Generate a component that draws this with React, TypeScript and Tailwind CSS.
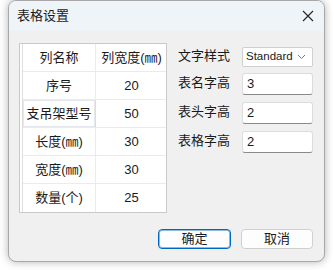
import React from 'react';

const rows = [
  { name: '序号', width: '20' },
  { name: '支吊架型号', width: '50', active: true },
  { name: '长度(㎜)', width: '30' },
  { name: '宽度(㎜)', width: '30' },
  { name: '数量(个)', width: '25' },
];

const fields = [
  { label: '表名字高', value: '3' },
  { label: '表头字高', value: '2' },
  { label: '表格字高', value: '2' },
];

const font = { fontFamily: '"Liberation Sans", "Noto Sans CJK SC", sans-serif' };

const App: React.FC = () => {
  return (
    <div className="w-[333px] h-[270px] bg-white overflow-hidden" style={font}>
      <div className="ml-[8px] w-[317px] h-[262px] flex flex-col rounded-[8px] border border-[#a8a8a8] overflow-hidden shadow-[0_0_8px_rgba(0,0,0,0.3)] bg-[#f0f0f0]">
        {/* title bar */}
        <div className="h-[30px] flex items-center justify-between bg-[#eff4f9] pl-[8px] pr-[9px] text-[13px] text-[#1a1a1a]">
          <span>表格设置</span>
          <svg width="12" height="12" viewBox="0 0 12 12" className="mr-[1px]">
            <path d="M1 1L11 11M11 1L1 11" stroke="#222" strokeWidth="1.1" />
          </svg>
        </div>

        <div className="flex-1 flex flex-col pl-[10px] pr-[10px] pt-[12px]">
          <div className="flex">
            {/* column table */}
            <div className="w-[148px] h-[170px] border border-[#c9c9c9] bg-white pl-[2px]">
              <div className="border-l border-[#dedede] h-full text-[13px] text-[#1a1a1a]">
                <div className="grid grid-cols-[73px_71px] h-[28px] border-b border-[#ebebeb]">
                  <div className="flex items-center justify-center border-r border-[#ebebeb]">列名称</div>
                  <div className="flex items-center justify-center">列宽度(㎜)</div>
                </div>
                {rows.map((r) => (
                  <div key={r.name} className="grid grid-cols-[73px_71px] h-[28px] border-b border-[#ebebeb] last:border-b-0">
                    <div
                      className={`flex items-center justify-center border-r ${
                        r.active ? 'border-[#dcdcdc] shadow-[inset_0_0_0_1px_#e4e8ec]' : 'border-[#ebebeb]'
                      }`}
                    >
                      {r.name}
                    </div>
                    <div className="flex items-center justify-center">{r.width}</div>
                  </div>
                ))}
              </div>
            </div>

            {/* settings */}
            <div className="ml-[11px] pt-[4px] flex flex-col text-[13px] text-[#1a1a1a]">
              <div className="flex items-center h-[20px]">
                <span className="w-[64px] mb-[3px]">文字样式</span>
                <div className="w-[71px] h-[20px] flex items-center justify-between bg-white border border-[#d0d0d0] rounded-[2px] pl-[3px] pr-[6px]">
                  <span className="text-[11.5px]">Standard</span>
                  <svg width="9" height="6" viewBox="0 0 9 6">
                    <path d="M1 1L4.5 4.5L8 1" stroke="#777" strokeWidth="1" fill="none" />
                  </svg>
                </div>
              </div>
              {fields.map((f, i) => (
                <div key={f.label} className={`flex items-center h-[22px] ${i === 0 ? 'mt-[6px]' : 'mt-[7px]'}`}>
                  <span className="w-[64px] mb-[3px]">{f.label}</span>
                  <div className="w-[71px] h-[22px] flex items-center bg-white border border-[#dcdcdc] border-b-[#8a8a8a] rounded-[3px] pl-[4px]">
                    {f.value}
                  </div>
                </div>
              ))}
            </div>
          </div>

          {/* buttons */}
          <div className="flex justify-end gap-[10px] mt-[16px] pr-[1px] text-[13px] text-[#1a1a1a]">
            <button className="w-[73px] h-[20px] flex items-center justify-center rounded-[4px] bg-[#fdfdfd] border border-[#0067c0] shadow-[inset_0_0_0_1px_rgba(0,103,192,0.45)]">
              确定
            </button>
            <button className="w-[72px] h-[20px] flex items-center justify-center rounded-[4px] bg-[#fdfdfd] border border-[#d0d0d0]">
              取消
            </button>
          </div>
        </div>
      </div>
    </div>
  );
};

export default App;
